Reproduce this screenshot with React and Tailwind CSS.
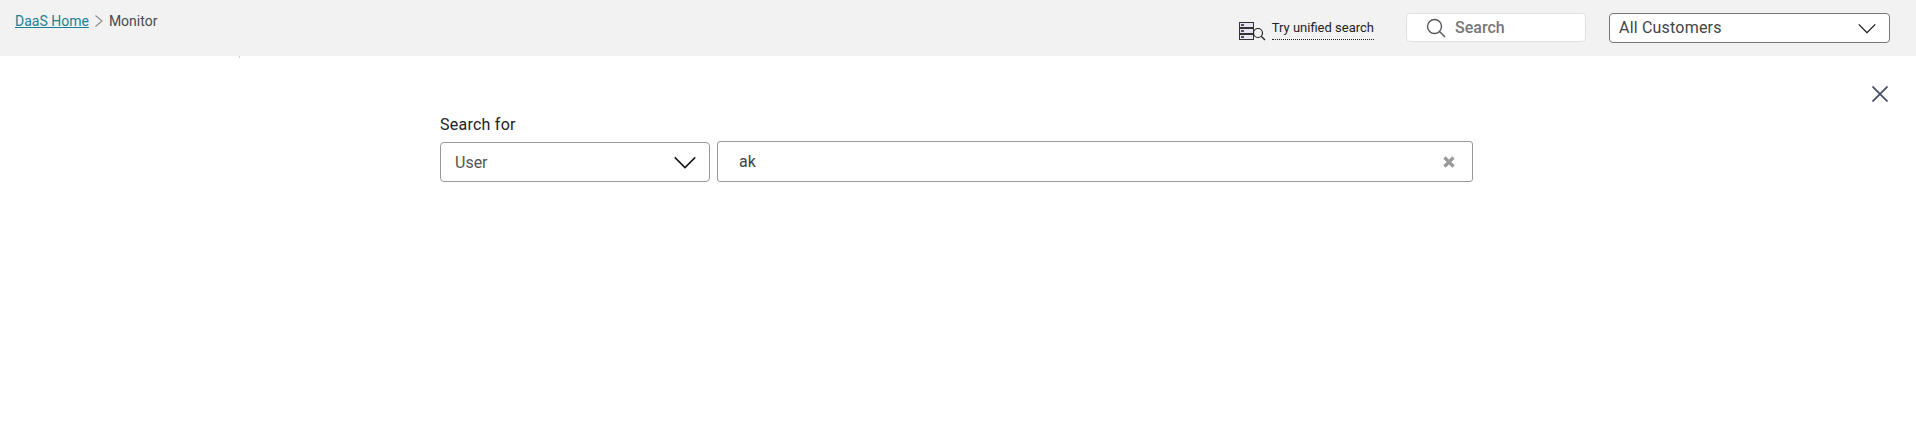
import React from 'react';

const font = { fontFamily: '"Roboto", "Liberation Sans", sans-serif' };

function Chevron({ className }) {
  return (
    <svg className={className} viewBox="0 0 24 14" fill="none" stroke="#111" strokeWidth="1.6">
      <path d="M1 1.5 L12 12.5 L23 1.5" />
    </svg>
  );
}

function UnifiedIcon() {
  return (
    <svg width="27" height="20" viewBox="0 0 27 20" fill="none" className="mr-[6px]">
      <rect x="0.5" y="0.5" width="14" height="5" fill="#e9e4f2" stroke="#333" />
      <rect x="0.5" y="6.5" width="14" height="5" fill="#e9e4f2" stroke="#333" />
      <rect x="0.5" y="12.5" width="14" height="5" fill="#e9e4f2" stroke="#333" />
      <path d="M2 3h3M2 9h3M2 15h3" stroke="#222" strokeWidth="1.4" />
      <circle cx="19" cy="11" r="4.5" fill="#f2f2f2" stroke="#222" strokeWidth="1.2" />
      <path d="M22.2 14.2 L26 18" stroke="#222" strokeWidth="1.3" />
    </svg>
  );
}

export default function App() {
  return (
    <div className="relative min-h-[431px] bg-white text-[#333]" style={font}>
      {/* Top bar */}
      <header className="flex h-[56px] justify-between bg-[#f2f2f2] pl-[15px] pr-[26px]">
        <nav className="flex h-[42px] items-center text-[14px]">
          <a href="#" className="text-[#1b7f97] underline">DaaS Home</a>
          <svg width="10" height="14" viewBox="0 0 10 14" fill="none" stroke="#8a8a8a" strokeWidth="1.1" className="mx-[5px]">
            <path d="M1.5 1.5 L8 7 L1.5 12.5" />
          </svg>
          <span className="text-[#4a4a4a]">Monitor</span>
        </nav>

        <div className="flex items-start pt-[13px]">
          <div className="mt-[9px] flex items-center">
            <UnifiedIcon />
          </div>
          <span className="mt-[6px] h-[21px] border-b border-dotted border-[#222] text-[13px] leading-[18px] text-[#222]">
            Try unified search
          </span>
          <div className="ml-[32px] flex h-[29px] w-[180px] items-center rounded-[4px] border border-[#e0e0e0] bg-white pl-[19px]">
            <svg width="20" height="20" viewBox="0 0 20 20" fill="none" stroke="#555" strokeWidth="1.4">
              <circle cx="8.5" cy="8.5" r="7" />
              <path d="M13.5 13.5 L19 19" />
            </svg>
            <span className="ml-[9px] pt-px text-[16px] font-medium text-[#777]">Search</span>
          </div>
          <div className="ml-[23px] flex h-[30px] w-[281px] items-center justify-between rounded-[4px] border border-[#777] bg-white pl-[9px] pr-[13px]">
            <span className="text-[16px] tracking-[0.2px] text-[#444]">All Customers</span>
            <Chevron className="h-[11px] w-[18px]" />
          </div>
        </div>
      </header>

      {/* small tick under the header */}
      <div className="absolute left-[239px] top-[56px] h-[2px] w-px bg-[#d0d0d0]" />

      {/* Close */}
      <div className="flex justify-end pr-[28px] pt-[30px]">
        <svg width="16" height="16" viewBox="0 0 16 16" stroke="#465062" strokeWidth="1.8">
          <path d="M0.5 0.5 L15.5 15.5 M15.5 0.5 L0.5 15.5" />
        </svg>
      </div>

      {/* Search form */}
      <div className="ml-[440px] mt-[13px] w-[1033px]">
        <label className="block text-[16px] leading-[20px] tracking-[0.25px] text-[#222]">Search for</label>
        <div className="mt-[6px] flex items-start gap-[7px]">
          <div className="mt-px flex h-[40px] w-[270px] items-center justify-between rounded-[4px] border border-[#999] pl-[14px] pr-[12px]">
            <span className="pt-px text-[16px] text-[#555]">User</span>
            <Chevron className="h-[13px] w-[24px]" />
          </div>
          <div className="flex h-[41px] flex-1 items-center justify-between rounded-[3px] border border-[#999] pl-[21px] pr-[17px]">
            <span className="pt-px text-[16px] text-[#444]">ak</span>
            <svg width="12" height="12" viewBox="0 0 12 12" stroke="#999" strokeWidth="3.2">
              <path d="M1.5 1.5 L10.5 10.5 M10.5 1.5 L1.5 10.5" />
            </svg>
          </div>
        </div>
      </div>
    </div>
  );
}
